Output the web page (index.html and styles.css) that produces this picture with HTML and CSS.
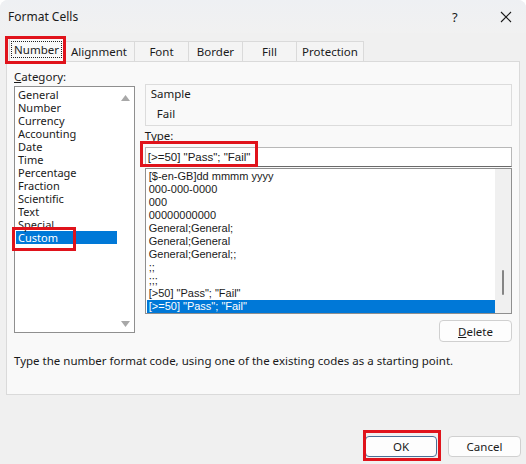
FILE: index.html
```html
<!DOCTYPE html>
<html>
<head>
<meta charset="utf-8">
<link rel="stylesheet" href="styles.css">
</head>
<body>
<div class="dialog">
  <div class="titlebar">
    <span class="title">Format Cells</span>
    <span class="help">?</span>
    <span class="close">
      <svg width="12" height="12" viewBox="0 0 12 12"><path d="M1 1 L11 11 M11 1 L1 11" stroke="#1a1a1a" stroke-width="1.1" fill="none"/></svg>
    </span>
  </div>
  <div class="tabs">
    <div class="tab active"><span class="focus">Number</span></div>
    <div class="tab w-align">Alignment</div>
    <div class="tab">Font</div>
    <div class="tab">Border</div>
    <div class="tab">Fill</div>
    <div class="tab w-prot">Protection</div>
  </div>
  <div class="panel">
    <div class="columns">
      <div class="left">
        <div class="label"><u>C</u>ategory:</div>
        <div class="catbox">
          <ul class="catlist">
            <li>General</li>
            <li>Number</li>
            <li>Currency</li>
            <li>Accounting</li>
            <li>Date</li>
            <li>Time</li>
            <li>Percentage</li>
            <li>Fraction</li>
            <li>Scientific</li>
            <li>Text</li>
            <li>Special</li>
            <li class="sel">Custom</li>
          </ul>
          <div class="vscroll">
            <svg width="9" height="6" viewBox="0 0 9 6"><path d="M0 6 L4.5 0 L9 6 Z" fill="#a8a8a8"/></svg>
            <svg width="9" height="6" viewBox="0 0 9 6"><path d="M0 0 L4.5 6 L9 0 Z" fill="#a8a8a8"/></svg>
          </div>
        </div>
      </div>
      <div class="right">
        <div class="sample">
          <div class="sample-title">Sample</div>
          <div class="sample-value">Fail</div>
        </div>
        <div class="label type-label"><u>T</u>ype:</div>
        <div class="typeinput">[&gt;=50] "Pass"; "Fail"</div>
        <div class="typebox">
          <ul class="typelist">
            <li>[$-en-GB]dd mmmm yyyy</li>
            <li>000-000-0000</li>
            <li>000</li>
            <li>00000000000</li>
            <li>General;General;</li>
            <li>General;General</li>
            <li>General;General;;</li>
            <li>;;</li>
            <li>;;;</li>
            <li>[&gt;50] "Pass"; "Fail"</li>
            <li class="sel">[&gt;=50] "Pass"; "Fail"</li>
          </ul>
          <div class="vscroll2"><div class="thumb"></div></div>
        </div>
        <div class="delrow"><button class="btn del"><u>D</u>elete</button></div>
      </div>
    </div>
    <div class="desc">Type the number format code, using one of the existing codes as a starting point.</div>
  </div>
  <div class="footer">
    <button class="btn ok">OK</button>
    <button class="btn cancel">Cancel</button>
  </div>
  <div class="mark m-tab"></div>
  <div class="mark m-custom"></div>
  <div class="mark m-type"></div>
  <div class="mark m-ok"></div>
</div>
</body>
</html>
```
FILE: styles.css
```css
* { box-sizing: border-box; }
html, body { margin: 0; padding: 0; background: #ffffff; }
body {
  font-family: "Noto Sans", "Open Sans", sans-serif;
  font-size: 11px;
  color: #1a1a1a;
}
.dialog {
  position: relative;
  width: 526px;
  height: 464px;
  background: #f0f0f0;
  border-radius: 8px 8px 0 0;
  display: flex;
  flex-direction: column;
  overflow: hidden;
}
.titlebar {
  height: 33px;
  display: flex;
  align-items: center;
  padding-left: 8px;
  background: linear-gradient(#eef0f3, #f1f1f1);
}
.title { font-size: 12px; flex: 1; }
.help { width: 14px; font-size: 13px; margin-right: 34px; }
.close { width: 12px; height: 12px; margin-right: 14px; display: flex; }

.tabs {
  height: 28px;
  display: flex;
  align-items: flex-end;
  padding-left: 9px;
  position: relative;
  z-index: 2;
}
.tab {
  height: 20px;
  width: 54px;
  border: 1px solid #dadada;
  border-bottom: none;
  border-right: none;
  background: #f4f4f4;
  display: flex;
  align-items: center;
  justify-content: center;
  font-size: 11.5px;
}
.tab.w-align { width: 70px; }
.tab.w-prot { width: 68px; border-right: 1px solid #dadada; }
.tab.active {
  width: 55px;
  background: #f9f9f9;
  border-right: 1px solid #dadada;
  margin-bottom: -1px;
  height: 25px;
  padding-bottom: 1px;
}
.tab.active + .tab { border-left: none; }
.focus {
  border: 1px dotted #222;
  padding: 1px 2px;
  line-height: 13px;
}

.panel {
  margin: 0 6px 0 6px;
  height: 334px;
  background: #f9f9f9;
  border: 1px solid #dadada;
  padding: 8px 7px 0 7px;
  position: relative;
  z-index: 1;
}
.columns { display: flex; gap: 10px; }
.left { width: 121px; }
.right { width: 368px; padding-top: 14px; }
.label { font-size: 11.5px; line-height: 13px; }
.catbox {
  margin-top: 3px;
  height: 247px;
  border: 1px solid #8f8f8f;
  background: #fff;
  display: flex;
}
ul { list-style: none; margin: 0; padding: 0; }
.catlist { flex: 1; padding: 1px 1px 0 1px; }
.catlist li {
  height: 13px;
  line-height: 13px;
  padding-left: 2px;
  font-size: 11px;
}
.catlist li.sel { background: #0078d7; color: #fff; }
.vscroll {
  width: 16px;
  background: #fff;
  display: flex;
  flex-direction: column;
  justify-content: space-between;
  align-items: center;
  padding: 8px 0 5px 0;
}

.sample {
  height: 42px;
  border: 1px solid #dcdcdc;
  padding: 2px 5px;
}
.sample-title { font-size: 11.5px; line-height: 13px; }
.sample-value { font-size: 11.5px; line-height: 13px; margin-top: 7px; padding-left: 6px; }
.type-label { margin-top: 3px; }
.typeinput {
  margin-top: 5px;
  height: 20px;
  border: 1px solid #b8b8b8;
  border-bottom: 1px solid #6a6a6a;
  background: #fff;
  padding-left: 2px;
  line-height: 18px;
  font-family: "Liberation Sans", sans-serif;
  font-size: 11.5px;
  white-space: pre;
}
.typebox {
  margin-top: 1px;
  height: 146px;
  border: 1px solid #8f8f8f;
  background: #fff;
  display: flex;
  overflow: hidden;
}
.typelist { flex: 1; padding: 1px 0 0 1px; }
.typelist li {
  height: 13px;
  line-height: 13px;
  padding-left: 2px;
  font-family: "Liberation Sans", sans-serif;
  font-size: 11px;
  white-space: pre;
}
.typelist li.sel { background: #0078d7; color: #fff; }
.vscroll2 {
  width: 16px;
  background: #f0f0f0;
  display: flex;
  justify-content: center;
  padding-top: 101px;
}
.thumb { width: 2px; height: 25px; background: #858585; border-radius: 1px; }

.delrow { display: flex; justify-content: flex-end; margin-top: 6px; }
.btn {
  font-family: "Noto Sans", "Open Sans", sans-serif;
  font-size: 11.5px;
  color: #1a1a1a;
  background: #fdfdfd;
  border: 1px solid #d0d0d0;
  border-radius: 4px;
  padding: 0;
  height: 22px;
  width: 73px;
}
.desc { margin-top: 12px; font-size: 11.5px; line-height: 13px; }

.footer {
  display: flex;
  justify-content: flex-end;
  gap: 11px;
  padding: 41px 5px 0 0;
}
.btn.ok { width: 72px; height: 21px; border: 1px solid #4a6f96; }
.btn.cancel { height: 21px; }

.mark {
  position: absolute;
  border: 3px solid #e0131b;
  z-index: 5;
}
.m-tab { left: 5px; top: 36px; width: 61px; height: 28px; }
.m-custom { left: 12px; top: 227px; width: 64px; height: 24px; }
.m-type { left: 140px; top: 141px; width: 118px; height: 26px; }
.m-ok { left: 363px; top: 430px; width: 78px; height: 31px; }
```
